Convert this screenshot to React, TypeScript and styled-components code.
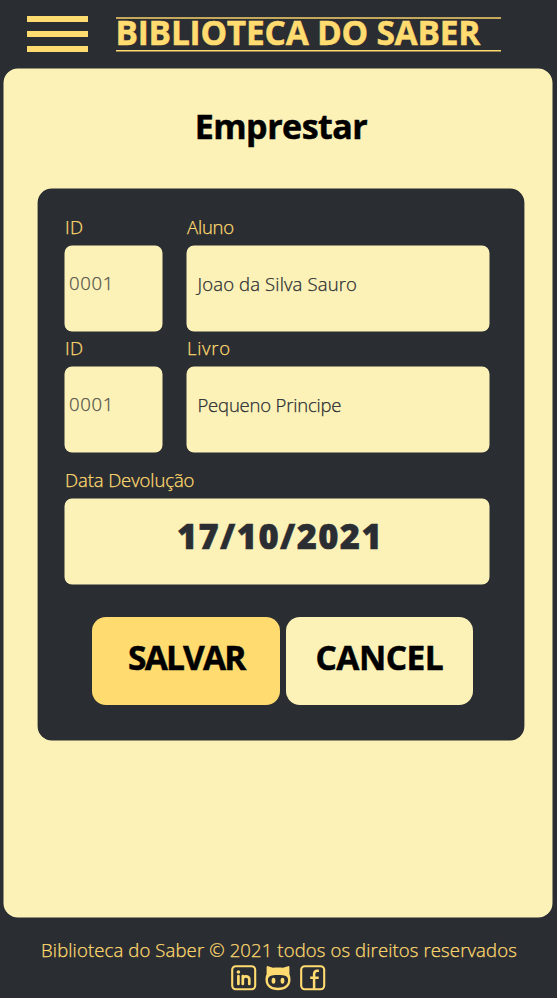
import React from "react";
import styled, { createGlobalStyle } from "styled-components";

const dark = "#2a2d32";
const cream = "#fcf2b8";
const gold = "#ffdb70";

const GlobalStyle = createGlobalStyle`
  * { box-sizing: border-box; }
  body {
    margin: 0;
    background: ${dark};
    font-family: "Open Sans", "Noto Sans", sans-serif;
    font-size: 18.5px;
    font-weight: 350;
    line-height: 24px;
    -webkit-text-stroke-width: 0.25px;
  }
`;

const Page = styled.div`
  display: flex;
  flex-direction: column;
  width: 557px;
  height: 998px;
  overflow: hidden;
  background: ${dark};
`;

const Header = styled.header`
  display: flex;
  align-items: flex-start;
  height: 69px;
  padding: 16px 0 0 27px;
`;

const MenuButton = styled.button`
  display: flex;
  flex-direction: column;
  gap: 9px;
  width: 61px;
  margin: 0 28px 0 0;
  padding: 0;
  border: 0;
  background: none;
`;

const MenuBar = styled.span`
  height: 6px;
  background: ${gold};
`;

const heading = `
  font-size: 34px;
  font-weight: 700;
  -webkit-text-stroke-width: 0.5px;
  stroke-linejoin: round;
  white-space: nowrap;
`;

const SiteTitle = styled.h1`
  ${heading}
  width: 385px;
  height: 34px;
  margin: 1px 0 0;
  border-top: 2px solid #c4a95c;
  border-bottom: 1px solid ${gold};
  box-shadow: 0 0.5px 0 ${gold};
  color: ${gold};
  font-size: 33.5px;
  line-height: 27px;
  letter-spacing: -0.24px;
  text-indent: -0.5px;
`;

const Main = styled.main`
  display: flex;
  flex-direction: column;
  height: 848px;
  margin: 0 5px 0 4px;
  padding: 37px 28px 0 34px;
  border-radius: 14px;
  background: ${cream};
  box-shadow: 0 0 0 0.5px ${cream};
`;

const PageTitle = styled.h2`
  ${heading}
  margin: 0 0 43px;
  color: #000;
  line-height: 40px;
  letter-spacing: -0.5px;
  text-align: center;
`;

const Card = styled.form`
  height: 551px;
  padding: 26px 35px 0 27px;
  border-radius: 14px;
  background: ${dark};
  box-shadow: 0 0 0 0.4px ${dark};
`;

const FieldRow = styled.div`
  display: grid;
  grid-template-columns: 97px 302px;
  column-gap: 25px;
  margin-bottom: 5px;
`;

const DateRow = styled.div`
  padding-top: 11px;
`;

const Label = styled.div<{ $spacing?: number }>`
  margin-bottom: 7px;
  color: ${gold};
  letter-spacing: ${(p) => p.$spacing ?? 0}px;
`;

const Value = styled.div<{ $muted?: boolean; $spacing?: number }>`
  height: 85px;
  padding: ${(p) => (p.$muted ? "25px 0 0 4px" : "26px 0 0 10.5px")};
  border-radius: 7px;
  background: ${cream};
  box-shadow: 0 0 0 0.5px ${cream};
  color: ${(p) => (p.$muted ? "#505148" : dark)};
  letter-spacing: ${(p) => p.$spacing ?? 0}px;
`;

const DateValue = styled(Value)`
  ${heading}
  padding: 17px 0 0 6px;
  font-size: 34.5px;
  font-weight: 800;
  line-height: 40px;
  text-align: center;
`;

const Actions = styled.div`
  display: flex;
  gap: 6px;
  padding: 33px 0 0 27px;
`;

const ActionButton = styled.button<{ $primary?: boolean; $spacing: number; $inset: number }>`
  ${heading}
  width: 187.5px;
  height: 88px;
  padding: 0 0 8px ${(p) => p.$inset}px;
  border: 0;
  border-radius: 14px;
  background: ${(p) => (p.$primary ? gold : cream)};
  color: #000;
  font-family: inherit;
  font-size: 33.5px;
  line-height: 40px;
  letter-spacing: ${(p) => p.$spacing}px;
  text-align: left;
`;

const Footer = styled.footer`
  display: flex;
  flex-direction: column;
  align-items: center;
  padding: 21px 0 0 1px;
  color: ${gold};
  letter-spacing: 0.13px;
`;

const Socials = styled.div`
  display: flex;
  gap: 8.5px;
  margin: 3px 2px 0 0;

  svg { display: block; }
`;

const LinkedIn = () => (
  <svg width="26" height="26" viewBox="0 0 26 26" fill="none" stroke={gold} strokeWidth="2.1">
    <rect x="1.2" y="1.2" width="23" height="23" rx="3.6" />
    <circle cx="7.4" cy="7" r="1.8" fill={gold} stroke="none" />
    <path strokeWidth="2.7" strokeLinecap="round" d="M7.4 11.2v7.8M11.8 11.2v7.8M11.8 14.2c0-3.6 6.5-4 6.5.3v4.5" />
  </svg>
);

const GitHub = () => (
  <svg width="26" height="26" viewBox="0 0 26 26" fill={gold}>
    <path
      fillRule="evenodd"
      d="M1.6 2.1c0-.9.6-1.2 1.4-.9L8 2.8c3.300-.5 6.700-.5 10 0l5-1.600c.8-.3 1.400 0 1.400.9v7.200c.8 1.600 1.100 3.300 1.100 5.400 0 6.800-5.200 10.500-12.500 10.500S.5 21.500.5 14.700c0-2.100.3-3.800 1.100-5.400ZM6.900 10.400c-2.500.2-4 2-4 4.700 0 5.200 4.200 7.700 10.100 7.700s10.100-2.500 10.100-7.700c0-2.700-1.500-4.500-4-4.700-4.100-.4-8.100-.4-12.200 0Z"
    />
    <ellipse cx="8.5" cy="15.7" rx="1.9" ry="3" />
    <ellipse cx="17.5" cy="15.7" rx="1.9" ry="3" />
  </svg>
);

const Facebook = () => (
  <svg width="26" height="26" viewBox="0 0 26 26" fill="none" stroke={gold} strokeWidth="2.1">
    <rect x="1.2" y="1.2" width="23" height="23" rx="3.6" />
    <path strokeWidth="2.5" d="M14.1 24V9.5c0-2.7 1.3-3.7 3.3-3.7h1.5M10.2 12.8h8.5" />
  </svg>
);

export default function App() {
  return (
    <>
      <GlobalStyle />
      <Page>
        <Header>
          <MenuButton aria-label="Menu">
            <MenuBar />
            <MenuBar />
            <MenuBar />
          </MenuButton>
          <SiteTitle>BIBLIOTECA DO SABER</SiteTitle>
        </Header>
        <Main>
          <PageTitle>Emprestar</PageTitle>
          <Card>
            <FieldRow>
              <div>
                <Label $spacing={0.3}>ID</Label>
                <Value $muted $spacing={0.7}>0001</Value>
              </div>
              <div>
                <Label $spacing={-0.2}>Aluno</Label>
                <Value $spacing={0.14}>Joao da Silva Sauro</Value>
              </div>
            </FieldRow>
            <FieldRow>
              <div>
                <Label $spacing={0.3}>ID</Label>
                <Value $muted $spacing={0.7}>0001</Value>
              </div>
              <div>
                <Label $spacing={0.7}>Livro</Label>
                <Value $spacing={-0.2}>Pequeno Principe</Value>
              </div>
            </FieldRow>
            <DateRow>
              <Label $spacing={-0.1}>Data Devolução</Label>
              <DateValue $spacing={1.4}>17/10/2021</DateValue>
            </DateRow>
            <Actions>
              <ActionButton type="button" $primary $spacing={-1.8} $inset={36}>SALVAR</ActionButton>
              <ActionButton type="button" $spacing={-0.5} $inset={30}>CANCEL</ActionButton>
            </Actions>
          </Card>
        </Main>
        <Footer>
          <span>Biblioteca do Saber © 2021 todos os direitos reservados</span>
          <Socials>
            <LinkedIn />
            <GitHub />
            <Facebook />
          </Socials>
        </Footer>
      </Page>
    </>
  );
}
